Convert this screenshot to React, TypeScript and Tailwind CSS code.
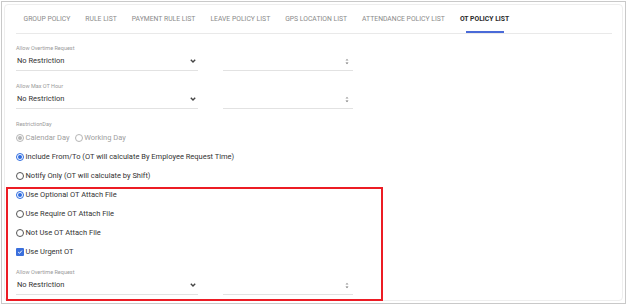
import React from "react";

const tabs = [
  "GROUP POLICY",
  "RULE LIST",
  "PAYMENT RULE LIST",
  "LEAVE POLICY LIST",
  "GPS LOCATION LIST",
  "ATTENDANCE POLICY LIST",
  "OT POLICY LIST",
];

function Chevron() {
  return (
    <svg width="6" height="4" viewBox="0 0 6 4" className="mr-[2px]">
      <path d="M0.8 0.8 L3 3 L5.2 0.8" fill="none" stroke="#444" strokeWidth="1.4" />
    </svg>
  );
}

function Spinner() {
  return (
    <svg width="4" height="7" viewBox="0 0 4 7" className="mr-[4px]">
      <path d="M0.5 2.5 L2 0.8 L3.5 2.5 Z" fill="#9a9a9a" />
      <path d="M0.5 4.5 L2 6.2 L3.5 4.5 Z" fill="#777" />
    </svg>
  );
}

function SelectField({ label }: { label: string }) {
  return (
    <div>
      <div className="text-[5.5px] leading-[7px] text-[#9a9a9a]">{label}</div>
      <div className="flex gap-[25px]">
        <div className="w-[182px] h-[19px] flex items-center justify-between border-b border-[#e2e2e2] pl-[1px]">
          <span className="text-[7.5px] text-[#333]">No Restriction</span>
          <Chevron />
        </div>
        <div className="w-[130px] h-[19px] flex items-center justify-end border-b border-[#e2e2e2]">
          <Spinner />
        </div>
      </div>
    </div>
  );
}

function Radio({ checked, disabled, label }: { checked?: boolean; disabled?: boolean; label: string }) {
  const ring = disabled ? "border-[#b5b5b5]" : checked ? "border-[#2d6be0]" : "border-[#555]";
  const dot = disabled ? "bg-[#b5b5b5]" : "bg-[#2d6be0]";
  return (
    <div className="flex items-center h-[19px]">
      <span className={`w-[8px] h-[8px] rounded-full border ${ring} flex items-center justify-center`}>
        {checked && <span className={`w-[4px] h-[4px] rounded-full ${dot}`} />}
      </span>
      <span className={`ml-[1.5px] text-[7.5px] ${disabled ? "text-[#a0a0a0]" : "text-[#333]"}`}>{label}</span>
    </div>
  );
}

export default function App() {
  return (
    <div className="w-[628px] h-[305px] bg-white pl-[1px] pt-[1px]" style={{ fontFamily: "Roboto, 'Liberation Sans', sans-serif" }}>
      <div className="relative w-[625px] h-[303px] border border-[#c9c9c9] p-[2px]">
        <div className="h-full rounded-[4px] border border-[#eeeeee] pl-[11px] pr-[10px] pt-[1px]">
          {/* tabs */}
          <div className="flex h-[28px] items-center pb-[1px] border-b border-[#e9e9e9]">
            {tabs.map((t) => {
              const active = t === "OT POLICY LIST";
              return (
                <div key={t} className="relative h-full flex items-center px-[7.5px]">
                  <span
                    className={`text-[6.8px] ${active ? "font-bold text-[#2a2a2a]" : "text-[#8a8a8a]"}`}
                  >
                    {t}
                  </span>
                  {active && (
                    <span className="absolute left-1/2 -translate-x-1/2 bottom-[-1px] w-[38px] h-[2px] bg-[#4a6ad8]" />
                  )}
                </div>
              );
            })}
          </div>

          <div className="pt-[11px]">
            <SelectField label="Allow Overtime Request" />
            <div className="mt-[12px]">
              <SelectField label="Allow Max OT Hour" />
            </div>

            <div className="mt-[12px] text-[5.5px] leading-[7px] text-[#9a9a9a]">RestrictionDay</div>
            <div className="flex gap-[5px]">
              <Radio checked disabled label="Calendar Day" />
              <Radio disabled label="Working Day" />
            </div>
            <Radio checked label="Include From/To (OT will calculate By Employee Request Time)" />
            <Radio label="Notify Only (OT will calculate by Shift)" />
            <Radio checked label="Use Optional OT Attach File" />
            <Radio label="Use Require OT Attach File" />
            <Radio label="Not Use OT Attach File" />
            <div className="flex items-center h-[19px]">
              <span className="w-[8px] h-[8px] rounded-[1px] bg-[#3a6fdc] flex items-center justify-center">
                <svg width="6" height="6" viewBox="0 0 6 6">
                  <path d="M1.2 3.1 L2.5 4.3 L4.9 1.6" fill="none" stroke="white" strokeWidth="1" />
                </svg>
              </span>
              <span className="ml-[1.5px] text-[7.5px] text-[#333]">Use Urgent OT</span>
            </div>
            <div className="mt-[8px]">
              <SelectField label="Allow Overtime Request" />
            </div>
          </div>
        </div>

        {/* annotation overlay */}
        <div className="absolute left-[4px] top-[185px] w-[377px] h-[114px] border-2 border-[#ec1c24]" />
      </div>
    </div>
  );
}
